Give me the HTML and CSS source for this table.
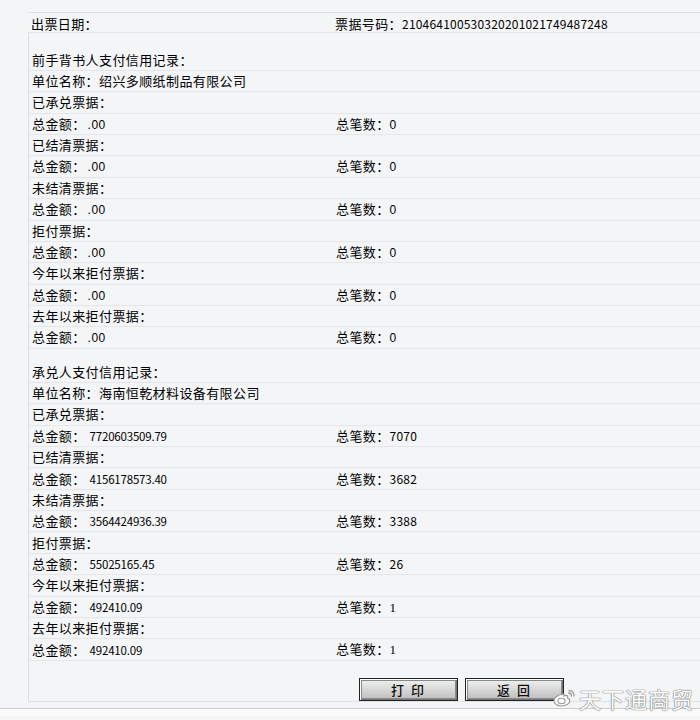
FILE: index.html
```html
<!DOCTYPE html>
<html lang="zh-CN">
<head>
<meta charset="utf-8">
<link rel="stylesheet" href="styles.css">
</head>
<body>
<div class="page">
  <div class="head row two">
    <div class="cell">出票日期：</div>
    <div class="cell">票据号码：<span class="num">210464100530320201021749487248</span></div>
  </div>
  <div class="box">
    <div class="spacer"></div>
    <div class="row"><div class="cell">前手背书人支付信用记录：</div></div>
    <div class="row"><div class="cell">单位名称：绍兴多顺纸制品有限公司</div></div>
    <div class="row"><div class="cell">已承兑票据：</div></div>
    <div class="row two"><div class="cell">总金额：<span class="zero">.00</span></div><div class="cell">总笔数：<span class="n0">0</span></div></div>
    <div class="row"><div class="cell">已结清票据：</div></div>
    <div class="row two"><div class="cell">总金额：<span class="zero">.00</span></div><div class="cell">总笔数：<span class="n0">0</span></div></div>
    <div class="row"><div class="cell">未结清票据：</div></div>
    <div class="row two"><div class="cell">总金额：<span class="zero">.00</span></div><div class="cell">总笔数：<span class="n0">0</span></div></div>
    <div class="row"><div class="cell">拒付票据：</div></div>
    <div class="row two"><div class="cell">总金额：<span class="zero">.00</span></div><div class="cell">总笔数：<span class="n0">0</span></div></div>
    <div class="row"><div class="cell">今年以来拒付票据：</div></div>
    <div class="row two"><div class="cell">总金额：<span class="zero">.00</span></div><div class="cell">总笔数：<span class="n0">0</span></div></div>
    <div class="row"><div class="cell">去年以来拒付票据：</div></div>
    <div class="row two"><div class="cell">总金额：<span class="zero">.00</span></div><div class="cell">总笔数：<span class="n0">0</span></div></div>

    <div class="spacer"></div>
    <div class="row"><div class="cell">承兑人支付信用记录：</div></div>
    <div class="row"><div class="cell">单位名称：海南恒乾材料设备有限公司</div></div>
    <div class="row"><div class="cell">已承兑票据：</div></div>
    <div class="row two"><div class="cell">总金额：<span class="amt">7720603509.79</span></div><div class="cell">总笔数：<span class="num">7070</span></div></div>
    <div class="row"><div class="cell">已结清票据：</div></div>
    <div class="row two"><div class="cell">总金额：<span class="amt">4156178573.40</span></div><div class="cell">总笔数：<span class="num">3682</span></div></div>
    <div class="row"><div class="cell">未结清票据：</div></div>
    <div class="row two"><div class="cell">总金额：<span class="amt">3564424936.39</span></div><div class="cell">总笔数：<span class="num">3388</span></div></div>
    <div class="row"><div class="cell">拒付票据：</div></div>
    <div class="row two"><div class="cell">总金额：<span class="amt">55025165.45</span></div><div class="cell">总笔数：<span class="num">26</span></div></div>
    <div class="row"><div class="cell">今年以来拒付票据：</div></div>
    <div class="row two"><div class="cell">总金额：<span class="amt">492410.09</span></div><div class="cell">总笔数：<span class="one">1</span></div></div>
    <div class="row"><div class="cell">去年以来拒付票据：</div></div>
    <div class="row two"><div class="cell">总金额：<span class="amt">492410.09</span></div><div class="cell">总笔数：<span class="one">1</span></div></div>

    <div class="actions">
      <button class="btn">打 印</button>
      <button class="btn">返 回</button>
    </div>
  </div>
  <div class="bottom"></div>
  <div class="mark">
    <svg class="weibo" width="24" height="20" viewBox="0 0 24 20">
      <path d="M10 6.5c-4 0-8 3-8 6.2 0 3 3.4 5.3 7.6 5.3 4.8 0 8.2-2.7 8.2-5.3 0-1.7-1.6-2.4-2.4-2.7 .6-1.4.3-2.6-1.3-2.6-1 0-2.2.5-2.2.5s.4-1.4-.3-1.8c-.5-.2-1 .1-1.6.4z" fill="#fff" stroke="#9a9a9a" stroke-width="1.2"/>
      <ellipse cx="9.5" cy="13" rx="3.6" ry="2.7" fill="none" stroke="#9a9a9a" stroke-width="1.1"/>
      <path d="M17 2.5a5 5 0 0 1 5 5.5M16.6 5a2.6 2.6 0 0 1 2.8 3" fill="none" stroke="#9a9a9a" stroke-width="1.3" stroke-linecap="round"/>
    </svg>
    <span>天下通商贸</span>
  </div>
</div>
</body>
</html>
```
FILE: styles.css
```css
html, body {
  margin: 0;
  padding: 0;
}
body {
  background: #f4f5f7;
  color: #000;
  font-family: "Noto Sans CJK SC", "Noto Sans", sans-serif;
  font-size: 13px;
  letter-spacing: 0.4px;
  width: 700px;
  height: 720px;
  overflow: hidden;
}
.page {
  position: relative;
  height: 720px;
  padding-top: 12px;
  box-sizing: border-box;
}
.head {
  border-top: 1px solid #dddfe3;
  height: 23px;
  margin-left: 28px;
  border-bottom: 1px solid #e3e5e8;
}
.box {
  margin-left: 28px;
  border-left: 1px solid #dcdee2;
  height: 669px;
  border-bottom: 1px solid #e0e2e5;
  box-sizing: border-box;
}
.spacer {
  height: 12.5px;
}
.box .spacer:first-child {
  height: 16px;
}
.row {
  display: grid;
  grid-template-columns: 1fr;
  height: 21.4px;
  box-sizing: border-box;
  border-bottom: 1px solid #e4e6e9;
  align-items: center;
}
.row.two {
  grid-template-columns: 304px 1fr;
}
.cell {
  padding-left: 3px;
  white-space: nowrap;
  line-height: 20px;
}
.head .cell {
  line-height: 22px;
}
.num {
  font-size: 12px;
  letter-spacing: 0.2px;
}
.amt {
  font-size: 11.5px;
  letter-spacing: -0.2px;
  margin-left: 4px;
}
.zero {
  font-family: "Liberation Sans", Arial, sans-serif;
  font-size: 12px;
  letter-spacing: 0.5px;
  margin-left: 2px;
}
.zero::first-letter {
  color: #c8c8c8;
}
.n0 {
  font-family: "Liberation Sans", Arial, sans-serif;
  font-size: 12px;
}
.one {
  font-family: "Liberation Serif", serif;
  font-size: 13px;
}
.actions {
  display: flex;
  gap: 7px;
  padding-left: 330px;
  margin-top: 17px;
}
.btn {
  width: 99px;
  height: 23px;
  padding: 0;
  font-family: "Noto Sans CJK SC", sans-serif;
  font-size: 13px;
  font-weight: 500;
  letter-spacing: 2px;
  color: #111;
  border: 1px solid #222;
  outline: 1px solid #8a8a8a;
  outline-offset: -3px;
  background: linear-gradient(#f2f2f2, #d2d2d2 60%, #bdbdbd);
  box-shadow: inset 1px 1px 0 #fff, inset -1px -1px 0 #777;
}
.bottom {
  margin-top: 6px;
  border-top: 1px solid #c9cbcf;
  height: 7px;
  background: #fafafa;
}
.mark {
  position: absolute;
  right: 6px;
  bottom: 6px;
  display: flex;
  align-items: center;
  gap: 3px;
  color: #fff;
  font-size: 22px;
  letter-spacing: 1px;
  text-shadow: 0 0 1px #777, 0 0 1px #777, 0 0 1px #777;
}
```
